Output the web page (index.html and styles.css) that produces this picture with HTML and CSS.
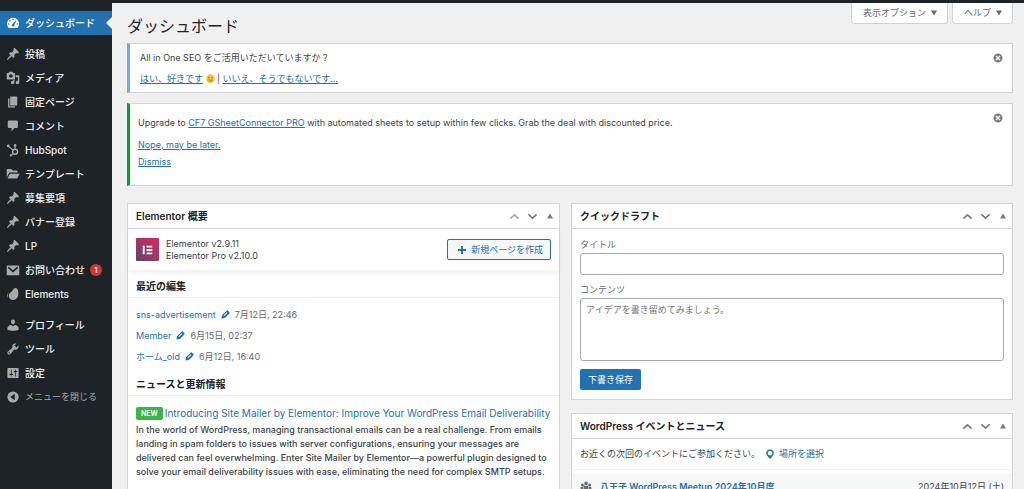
FILE: index.html
```html
<!DOCTYPE html>
<html lang="ja">
<head>
<meta charset="utf-8">
<meta name="viewport" content="width=device-width, initial-scale=1">
<title>ダッシュボード</title>
<link rel="stylesheet" href="styles.css">
</head>
<body>
<svg class="sprite" aria-hidden="true">
  <symbol id="i-dash" viewBox="0 0 20 20"><path fill-rule="evenodd" d="M10 2.500a8.500 8.500 0 0 0-8.500 8.500c0 2.300.9 4.400 2.300 6h12.400c1.400-1.600 2.300-3.700 2.300-6A8.500 8.500 0 0 0 10 2.500zM10 4a1.100 1.100 0 1 1 0 2.200A1.100 1.100 0 0 1 10 4zM5.600 5.800a1.100 1.100 0 1 1 0 2.200 1.100 1.100 0 0 1 0-2.200zM3.900 10.200a1.100 1.100 0 1 1 0 2.200 1.100 1.100 0 0 1 0-2.200zM16.100 10.200a1.100 1.100 0 1 1 0 2.200 1.100 1.100 0 0 1 0-2.200zM14 6l.7.500-2.700 6.200c.1 1.500-.8 2.300-2 2.300-1.200 0-2.100-.9-1.900-2 .1-.9.700-1.400 1.400-1.600z"/></symbol>
  <symbol id="i-pin" viewBox="0 0 20 20"><path d="M10.440 3.020l1.820-1.820 6.360 6.350-1.830 1.820c-1.050-.68-2.480-.57-3.410.36l-.75.75c-.92.93-1.040 2.350-.35 3.410l-1.830 1.820-2.410-2.410-2.800 2.790c-.42.42-3.380 2.710-3.800 2.290s1.860-3.390 2.280-3.810l2.790-2.790L4.100 9.360l1.830-1.820c1.050.69 2.480.57 3.400-.36l.75-.75c.93-.92 1.050-2.350.36-3.410z"/></symbol>
  <symbol id="i-media" viewBox="0 0 20 20"><path fill-rule="evenodd" d="M13 11V4c0-.55-.45-1-1-1h-1.670L9 1H5L3.670 3H2c-.55 0-1 .45-1 1v7c0 .55.45 1 1 1h10c.55 0 1-.45 1-1zM7 4.500c1.380 0 2.500 1.120 2.500 2.500S8.380 9.500 7 9.500 4.500 8.380 4.500 7 5.620 4.500 7 4.500zM14 6h5v10.500c0 1.380-1.120 2.500-2.500 2.500S14 17.880 14 16.500s1.120-2.500 2.500-2.500c.17 0 .34.020.5.050V9h-3V6zm-4 8.050V13h2v3.500c0 1.380-1.120 2.500-2.500 2.500S7 17.880 7 16.500 8.120 14 9.500 14c.17 0 .34.020.5.050z"/></symbol>
  <symbol id="i-page" viewBox="0 0 20 20"><path d="M6 15V2h10v13H6zm-1 1h8v2H3V5h2v11z"/></symbol>
  <symbol id="i-comment" viewBox="0 0 20 20"><path d="M4.500 2h10.500c1.100 0 2 .9 2 2v7c0 1.100-.9 2-2 2h-3l-4 5v-5H4.500c-1.100 0-2-.9-2-2V4c0-1.100.9-2 2-2z"/></symbol>
  <symbol id="i-hub" viewBox="0 0 20 20"><circle cx="13" cy="12.500" r="3.500" fill="none" stroke="currentColor" stroke-width="2"/><path d="M13 9V4M10.200 10.300L3.500 4.500M10.300 15l-3.300 3" fill="none" stroke="currentColor" stroke-width="1.600"/><circle cx="13" cy="3.500" r="1.900"/><circle cx="3.200" cy="4.200" r="2"/><circle cx="6.800" cy="17.700" r="1.500"/></symbol>
  <symbol id="i-folder" viewBox="0 0 20 20"><path d="M1 14.500V4.500C1 3.700 1.700 3 2.500 3h5l2 2H15c.8 0 1.500.7 1.500 1.500V8H6.200c-.9 0-1.700.4-2.200 1.200zM2 16.500l3.300-6.300c.3-.5.700-.7 1.200-.7H19.500l-3.100 6.200c-.3.500-.7.800-1.200.8z"/></symbol>
  <symbol id="i-mail" viewBox="0 0 20 20"><path fill-rule="evenodd" d="M2.500 3.500h15c.8 0 1.500.7 1.500 1.500v11c0 .8-.7 1.500-1.500 1.500h-15C1.700 17.500 1 16.800 1 16V5c0-.8.700-1.500 1.500-1.500zM3 6v1.500l7 6 7-6V6l-1-.5-6 5-6-5z"/></symbol>
  <symbol id="i-leaf" viewBox="0 0 20 20"><path d="M14.500 1.500c2.500 1 3.800 6 2.800 10.500-.9 4-3.400 6.500-7.300 6.500-3.700 0-6-2.700-6-5.800 0-4 3.600-5 5-7.300 1-1.800 2.800-4.700 5.500-3.900zM3.500 7.500c-2 2.600-2.600 5.500-1 8.300-.3-3.200.5-5.700 1-8.300z"/></symbol>
  <symbol id="i-user" viewBox="0 0 20 20"><path d="M10 9.250c-2.270 0-2.730-3.440-2.730-3.440C7 4.020 7.820 2 9.970 2c2.160 0 2.980 2.020 2.710 3.810 0 0-.41 3.440-2.680 3.440zm0 2.570L12.720 10c2.390 0 5.280 2.330 5.280 4.530v2.490s-4.400 1.130-8 1.130c-3.650 0-8-1.130-8-1.130v-2.490c0-2.250 2.700-4.480 5.230-4.480z"/></symbol>
  <symbol id="i-tool" viewBox="0 0 20 20"><path fill-rule="evenodd" d="M16.680 9.770c-1.340 1.340-3.300 1.670-4.950.99l-5.410 6.520c-.99.99-2.590.99-3.580 0s-.99-2.590 0-3.570l6.520-5.420c-.68-1.650-.35-3.610.99-4.950 1.280-1.280 3.120-1.620 4.720-1.060l-2.890 2.890 2.820 2.820 2.860-2.870c.53 1.580.18 3.390-1.080 4.650zM3.810 16.210c.4.390 1.040.390 1.430 0 .4-.4.4-1.040 0-1.430-.39-.4-1.030-.4-1.430 0-.39.39-.39 1.030 0 1.430z"/></symbol>
  <symbol id="i-settings" viewBox="0 0 20 20"><path fill-rule="evenodd" d="M18 16V4c0-.55-.45-1-1-1H3c-.55 0-1 .45-1 1v12c0 .55.45 1 1 1h14c.55 0 1-.45 1-1zM8 11h1c.55 0 1 .45 1 1s-.45 1-1 1H8v1.500c0 .28-.22.5-.5.5s-.5-.22-.5-.5V13H6c-.55 0-1-.45-1-1s.45-1 1-1h1V5.500c0-.28.22-.5.5-.5s.5.22.5.5V11zm5-2h-1c-.55 0-1-.45-1-1s.45-1 1-1h1V5.500c0-.28.22-.5.5-.5s.5.22.5.5V7h1c.55 0 1 .45 1 1s-.45 1-1 1h-1v5.500c0 .28-.22.5-.5.5s-.5-.22-.5-.5V9z"/></symbol>
  <symbol id="i-collapse" viewBox="0 0 20 20"><path fill-rule="evenodd" d="M10 2a8 8 0 1 1 0 16 8 8 0 0 1 0-16zM12.500 5.500L6 10l6.500 4.500z"/></symbol>
  <symbol id="i-close" viewBox="0 0 20 20"><path fill-rule="evenodd" d="M10 1a9 9 0 1 1 0 18 9 9 0 0 1 0-18zM6.900 5L5 6.900 8.100 10 5 13.100 6.900 15l3.100-3.100 3.100 3.100 1.900-1.900-3.100-3.100L15 6.900 13.100 5 10 8.100z"/></symbol>
  <symbol id="i-up" viewBox="0 0 20 20"><path d="M2.500 14l7.500-7 7.500 7" fill="none" stroke="currentColor" stroke-width="3"/></symbol>
  <symbol id="i-down" viewBox="0 0 20 20"><path d="M2.500 6l7.500 7 7.500-7" fill="none" stroke="currentColor" stroke-width="3"/></symbol>
  <symbol id="i-tri" viewBox="0 0 10 10"><path d="M0 9l5-8 5 8z"/></symbol>
  <symbol id="i-tridown" viewBox="0 0 10 10"><path d="M0 1h10L5 9z"/></symbol>
  <symbol id="i-plus" viewBox="0 0 10 10"><path d="M4 1h2v3h3v2H6v3H4V6H1V4h3z"/></symbol>
  <symbol id="i-pencil" viewBox="0 0 20 20"><path fill-rule="evenodd" d="M12.500 1.500c.9-.9 2-.9 2.900 0l3.200 3.200c.9.9.9 2 0 2.900L8.700 17.500 1 19l1.500-7.700zM12.500 5l-7 7 1.500 1.500 7-7z"/></symbol>
  <symbol id="i-place" viewBox="0 0 20 20"><path fill-rule="evenodd" d="M10 1a7.500 7.500 0 0 1 7.500 7.500c0 3.500-3.500 6-4 8L10 19.500l-3.500-3c-.5-2-4-4.500-4-8A7.500 7.500 0 0 1 10 1zM10 4a4.500 4.500 0 1 0 0 9 4.500 4.500 0 0 0 0-9z"/></symbol>
  <symbol id="i-group" viewBox="0 0 20 20"><circle cx="10" cy="4" r="3"/><circle cx="4" cy="6.500" r="2.500"/><circle cx="16" cy="6.500" r="2.500"/><path d="M6 8h8v8H6zM1 10h4v7H1zM15 10h4v7h-4z"/></symbol>
  <symbol id="i-smile" viewBox="0 0 20 20"><circle cx="10" cy="10" r="9.500" fill="#fdc62f"/><path d="M1.500 14a9.500 9.500 0 0 0 17 0q-8.500 5-17 0z" fill="#ef9b1e"/><ellipse cx="6.500" cy="8" rx="1.200" ry="1.700" fill="#71460f"/><ellipse cx="13.500" cy="8" rx="1.200" ry="1.700" fill="#71460f"/><path d="M5.500 12.500q4.500 3.500 9 0" stroke="#71460f" stroke-width="1.400" fill="none"/></symbol>
</svg>
<div class="app">
  <header class="adminbar"></header>
  <nav class="menu" aria-label="メインメニュー">
    <ul class="menu-group">
      <li><a class="item current" href="#"><svg class="ico"><use href="#i-dash"/></svg>ダッシュボード</a></li>
    </ul>
    <ul class="menu-group">
      <li><a class="item" href="#"><svg class="ico"><use href="#i-pin"/></svg>投稿</a></li>
      <li><a class="item" href="#"><svg class="ico"><use href="#i-media"/></svg>メディア</a></li>
      <li><a class="item" href="#"><svg class="ico"><use href="#i-page"/></svg>固定ページ</a></li>
      <li><a class="item" href="#"><svg class="ico"><use href="#i-comment"/></svg>コメント</a></li>
      <li><a class="item" href="#"><svg class="ico"><use href="#i-hub"/></svg>HubSpot</a></li>
      <li><a class="item" href="#"><svg class="ico"><use href="#i-folder"/></svg>テンプレート</a></li>
      <li><a class="item" href="#"><svg class="ico"><use href="#i-pin"/></svg>募集要項</a></li>
      <li><a class="item" href="#"><svg class="ico"><use href="#i-pin"/></svg>バナー登録</a></li>
      <li><a class="item" href="#"><svg class="ico"><use href="#i-pin"/></svg>LP</a></li>
      <li><a class="item" href="#"><svg class="ico"><use href="#i-mail"/></svg>お問い合わせ<span class="count">1</span></a></li>
      <li><a class="item" href="#"><svg class="ico"><use href="#i-leaf"/></svg>Elements</a></li>
    </ul>
    <ul class="menu-group">
      <li><a class="item" href="#"><svg class="ico"><use href="#i-user"/></svg>プロフィール</a></li>
      <li><a class="item" href="#"><svg class="ico"><use href="#i-tool"/></svg>ツール</a></li>
      <li><a class="item" href="#"><svg class="ico"><use href="#i-settings"/></svg>設定</a></li>
      <li><button class="item collapse" type="button"><svg class="ico"><use href="#i-collapse"/></svg>メニューを閉じる</button></li>
    </ul>
  </nav>
  <main class="content">
    <div class="top">
      <h1>ダッシュボード</h1>
      <div class="tabs">
        <button class="tab" type="button">表示オプション<svg class="caret"><use href="#i-tridown"/></svg></button>
        <button class="tab" type="button">ヘルプ<svg class="caret"><use href="#i-tridown"/></svg></button>
      </div>
    </div>

    <section class="notice info">
      <div class="notice-text">
        <p>All in One SEO をご活用いただいていますか ?</p>
        <p><a href="#">はい、好きです</a> <svg class="emoji" role="img" aria-label="笑顔"><use href="#i-smile"/></svg> | <a href="#">いいえ、そうでもないです...</a></p>
      </div>
      <button class="close" type="button" aria-label="閉じる"><svg><use href="#i-close"/></svg></button>
    </section>

    <section class="notice success">
      <div class="notice-text">
        <p>Upgrade to <a href="#">CF7 GSheetConnector PRO</a> with automated sheets to setup within few clicks. Grab the deal with discounted price.</p>
        <ul>
          <li><a href="#">Nope, may be later.</a></li>
          <li><a href="#">Dismiss</a></li>
        </ul>
      </div>
      <button class="close" type="button" aria-label="閉じる"><svg><use href="#i-close"/></svg></button>
    </section>

    <div class="widgets">
      <div class="column">
        <section class="box">
          <header class="box-head">
            <h2>Elementor 概要</h2>
            <div class="handles">
              <button class="off" type="button" aria-label="上に移動"><svg><use href="#i-up"/></svg></button>
              <button type="button" aria-label="下に移動"><svg><use href="#i-down"/></svg></button>
              <button class="toggle" type="button" aria-label="パネルを閉じる"><svg><use href="#i-tri"/></svg></button>
            </div>
          </header>
          <div class="version">
            <svg class="logo" viewBox="0 0 24 24" aria-hidden="true"><defs><linearGradient id="lg" x1="1" y1="0" x2="0" y2="1"><stop offset="0" stop-color="#e2285b"/><stop offset="1" stop-color="#5c4470"/></linearGradient></defs><rect width="24" height="24" rx="1" fill="url(#lg)"/><path d="M7 8h2v9H7zM11 8h6v2h-6zM11 11.500h6v2h-6zM11 15h6v2h-6z" fill="#fff"/></svg>
            <div class="version-text">Elementor v2.9.11<br>Elementor Pro v2.10.0</div>
            <a class="create" href="#"><svg><use href="#i-plus"/></svg>新規ページを作成</a>
          </div>
          <h3>最近の編集</h3>
          <ul class="recent">
            <li><a href="#">sns-advertisement<svg><use href="#i-pencil"/></svg></a><time>7月12日, 22:46</time></li>
            <li><a href="#">Member<svg><use href="#i-pencil"/></svg></a><time>6月15日, 02:37</time></li>
            <li><a href="#">ホーム_old<svg><use href="#i-pencil"/></svg></a><time>6月12日, 16:40</time></li>
          </ul>
          <h3>ニュースと更新情報</h3>
          <article class="news">
            <a class="news-title" href="#"><span class="new">NEW</span>Introducing Site Mailer by Elementor: Improve Your WordPress Email Deliverability</a>
            <p>In the world of WordPress, managing transactional emails can be a real challenge. From emails landing in spam folders to issues with server configurations, ensuring your messages are delivered can feel overwhelming. Enter Site Mailer by Elementor—a powerful plugin designed to solve your email deliverability issues with ease, eliminating the need for complex SMTP setups.</p>
          </article>
        </section>
      </div>
      <div class="column">
        <section class="box">
          <header class="box-head">
            <h2>クイックドラフト</h2>
            <div class="handles">
              <button type="button" aria-label="上に移動"><svg><use href="#i-up"/></svg></button>
              <button type="button" aria-label="下に移動"><svg><use href="#i-down"/></svg></button>
              <button class="toggle" type="button" aria-label="パネルを閉じる"><svg><use href="#i-tri"/></svg></button>
            </div>
          </header>
          <form class="draft">
            <label for="title">タイトル</label>
            <input id="title" type="text">
            <label for="body">コンテンツ</label>
            <textarea id="body" placeholder="アイデアを書き留めてみましょう。"></textarea>
            <button class="save" type="button">下書き保存</button>
          </form>
        </section>
        <section class="box">
          <header class="box-head">
            <h2>WordPress イベントとニュース</h2>
            <div class="handles">
              <button type="button" aria-label="上に移動"><svg><use href="#i-up"/></svg></button>
              <button type="button" aria-label="下に移動"><svg><use href="#i-down"/></svg></button>
              <button class="toggle" type="button" aria-label="パネルを閉じる"><svg><use href="#i-tri"/></svg></button>
            </div>
          </header>
          <div class="near">お近くの次回のイベントにご参加ください。<a href="#"><svg><use href="#i-place"/></svg>場所を選択</a></div>
          <ul class="events">
            <li><svg><use href="#i-group"/></svg><a href="#">八王子 WordPress Meetup 2024年10月度</a><time>2024年10月12日 (土)</time></li>
          </ul>
        </section>
      </div>
    </div>
  </main>
</div>
</body>
</html>
```
FILE: styles.css
```css
* { box-sizing: border-box; }
body {
  margin: 0;
  background: #f0f0f1;
  color: #3c434a;
  font: 9px/14px Inter, "Noto Sans CJK JP", sans-serif;
}
h1, h2, h3, p, ul { margin: 0; padding: 0; }
ul { list-style: none; }
a { color: #2271b1; }
svg { fill: currentColor; flex: none; }
button, input, textarea { font: inherit; color: inherit; margin: 0; }
button { border: 0; padding: 0; background: none; cursor: pointer; }
.sprite { position: absolute; width: 0; height: 0; }

.app {
  display: grid;
  grid-template-columns: 112px minmax(0, 1fr);
  grid-template-rows: 3px minmax(0, 1fr);
  height: 100vh;
}
.adminbar { grid-column: 1 / -1; background: #1d2327; }

.menu {
  display: flex;
  flex-direction: column;
  gap: 7px;
  padding-top: 8px;
  background: #1d2327;
}
.item {
  display: flex;
  align-items: center;
  gap: 5px;
  width: 100%;
  height: 24px;
  padding-left: 6px;
  color: #f0f0f1;
  font-size: 10px;
  font-weight: 500;
  text-decoration: none;
  white-space: nowrap;
}
.ico { width: 14px; height: 14px; color: #a7aaad; }
.current { position: relative; background: #2271b1; color: #fff; }
.current .ico { color: #fff; }
.current::after {
  content: "";
  position: absolute;
  right: 0;
  top: 6px;
  border: 6px solid transparent;
  border-right-color: #f0f0f1;
  border-left: 0;
}
.collapse { color: #a7aaad; font-size: 9px; font-weight: 400; }
.count {
  width: 12px;
  height: 12px;
  border-radius: 6px;
  background: #d63638;
  color: #fff;
  font-size: 8px;
  line-height: 12px;
  text-align: center;
}

.content {
  padding: 0 11px 20px 15px;
  overflow-y: auto;
  scrollbar-width: none;
}
.top { display: flex; justify-content: space-between; align-items: flex-start; height: 40px; }
h1 { padding-top: 13px; color: #1d2327; font-size: 16px; line-height: 20px; font-weight: 400; }
.tabs { display: flex; gap: 4px; }
.tab {
  display: flex;
  align-items: center;
  gap: 5px;
  height: 21px;
  padding: 0 10px 0 11px;
  border: 1px solid #d2d3d6;
  border-top: 0;
  border-radius: 0 0 3px 3px;
  background: #fff;
  color: #646970;
}
.caret { width: 6px; height: 6px; }

.notice {
  display: flex;
  justify-content: space-between;
  align-items: flex-start;
  margin-bottom: 10px;
  padding: 7px 9px 6px 10px;
  border: 1px solid #d2d3d6;
  border-left: 3px solid #72aee6;
  background: #fff;
}
.info .notice-text { display: grid; gap: 7px; }
.success { margin-bottom: 17px; padding: 7px 9px 15px 8px; border-left-color: #00a32a; }
.success .notice-text { padding-top: 5px; }
.success ul { margin-top: 6px; }
.success li { line-height: 17px; }
.emoji { width: 9px; height: 9px; vertical-align: -1px; }
.close { height: 12px; color: #787c82; }
.close svg { display: block; width: 10px; height: 10px; margin: 1px 0 0; }

.widgets { display: grid; grid-template-columns: 49fr 50fr; gap: 11px; align-items: start; }
.column { display: grid; gap: 13px; min-width: 0; }
.box { border: 1px solid #d2d3d6; background: #fff; min-width: 0; }
.box-head {
  display: flex;
  justify-content: space-between;
  align-items: center;
  height: 25px;
  padding: 0 6px 0 8px;
  border-bottom: 1px solid #d2d3d6;
}
h2, h3 { color: #1d2327; font-size: 10px; font-weight: 600; line-height: 14px; }
.handles { display: flex; align-items: center; gap: 7px; color: #787c82; }
.handles svg { display: block; width: 11px; height: 11px; }
.handles .off { color: #a7aaad; }
.handles .toggle { padding-left: 2px; }
.handles .toggle svg { width: 6px; height: 6px; }

.version {
  display: flex;
  align-items: center;
  gap: 7px;
  height: 41px;
  padding: 0 8px;
  box-shadow: 0 3px 5px rgba(0, 0, 0, .06);
}
.logo { width: 23px; height: 23px; }
.version-text { flex: 1; line-height: 12px; }
.create {
  display: flex;
  align-items: center;
  gap: 4px;
  height: 21px;
  padding: 0 7px 0 9px;
  border: 1px solid #2271b1;
  border-radius: 2px;
  background: #f6f7f7;
  text-decoration: none;
}
.create svg { width: 10px; height: 10px; }
h3 { padding: 9px 8px 4px; border-bottom: 1px solid #f0f0f1; }
.recent { padding: 6px 8px 1px; }
.recent li { display: flex; gap: 5px; line-height: 21px; color: #646970; }
.recent a { display: flex; align-items: center; gap: 5px; text-decoration: none; }
.recent svg { width: 9px; height: 9px; }
.news { padding: 10px 8px; }
.news-title { display: flex; align-items: center; gap: 2px; font-size: 10px; text-decoration: none; white-space: nowrap; }
.new {
  padding: 0 5px;
  border-radius: 2px;
  background: #39b54a;
  color: #fff;
  font-size: 7px;
  line-height: 13px;
  font-weight: 600;
}
.news p { margin-top: 3px; font-weight: 500; }

.draft { display: flex; flex-direction: column; padding: 9px 8px; }
.draft label { margin-bottom: 1px; color: #646970; }
.draft input, .draft textarea {
  width: 100%;
  margin-bottom: 8px;
  padding: 4px 5px;
  border: 1px solid #a7aaad;
  border-radius: 3px;
  background: #fff;
}
.draft input { height: 22px; }
.draft textarea { height: 63px; resize: none; }
.draft ::placeholder { color: #757575; }
.save {
  align-self: flex-start;
  height: 21px;
  padding: 0 8px;
  border-radius: 2px;
  background: #2271b1;
  color: #fff;
}
.near { display: flex; align-items: center; gap: 5px; height: 31px; padding: 0 8px; border-bottom: 1px solid #f0f0f1; }
.near a { display: flex; align-items: center; gap: 4px; text-decoration: none; }
.near svg { width: 10px; height: 10px; }
.events { margin-top: 4px; background: #f6f7f7; }
.events li { display: flex; align-items: center; gap: 8px; padding: 6px 8px; }
.events svg { width: 12px; height: 12px; color: #646970; }
.events a { flex: 1; font-weight: 600; text-decoration: none; }
```
